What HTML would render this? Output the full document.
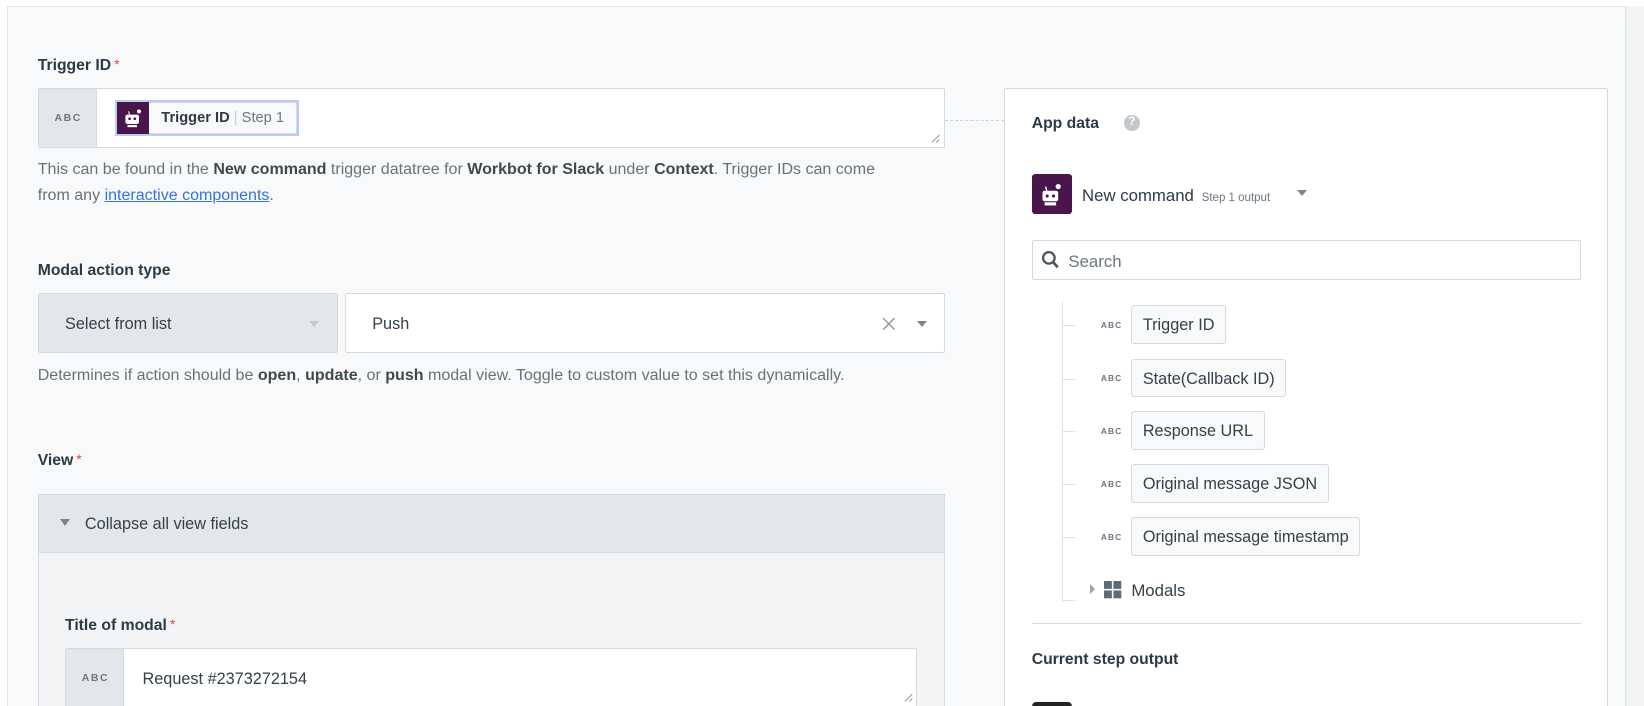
<!DOCTYPE html>
<html><head><meta charset="utf-8"><style>
*{box-sizing:border-box;margin:0;padding:0}
html,body{width:1644px;height:706px;overflow:hidden;background:#f3f4f6}
body{font-family:"Liberation Sans",sans-serif;color:#2d3a45}
#w{zoom:1.0485;width:1568px;height:673px;position:relative;background:#fff}
.a{position:absolute}
.page{left:7px;top:6px;width:1543px;height:700px;background:#f8f9fa;border-left:1px solid #e3e6e9;border-top:1px solid #e3e6e9}
.lbl{font-size:15px;font-weight:bold;color:#2d3a45}
.lbl i{color:#e0473c;font-style:normal;font-weight:normal;font-size:13px;vertical-align:top;margin-left:3px}
.help{font-size:15.3px;color:#67737c;line-height:25px}
.help b{color:#3d4a54}
.box{background:#fff;border:1px solid #d6dadf;border-radius:2px}
.abc{font-size:10px;font-weight:bold;letter-spacing:1.5px;color:#6b7680}
.side{background:#e4e7ea;border-right:1px solid #d6dadf}
.pill{border:1px solid #d6dadf;border-radius:3px;background:#f8f9fa;font-size:15.5px;color:#34414b;height:37px;line-height:37px;padding:0 10px}
.bot{background:#4a154b;border-radius:3px}
</style></head><body><div id="w">
<div class="a page"></div>
<div class="a" style="left:1550px;top:6px;width:18px;height:667px;background:#f3f4f6;border-left:1px solid #e3e6e9"></div>

<div class="a lbl" style="left:36px;top:54px">Trigger ID<i>*</i></div>
<div class="a box" style="left:36px;top:84px;width:865px;height:57px;overflow:hidden">
 <div class="a side" style="left:0;top:0;width:56px;height:57px"></div>
 <div class="a abc" style="left:15px;top:23px">ABC</div>
 <div class="a" style="left:73px;top:10px;width:175px;height:35px;border:2px solid #b7cdf2;background:#fff">
  <div class="a" style="left:0;top:0;width:171px;height:31px;border:1px solid #d6dadf;background:#f8f9fa"></div>
  <div class="a bot" style="left:0;top:0;width:30px;height:31px;border-radius:0">
   <svg width="30" height="31" viewBox="0 0 30 31"><rect x="8" y="12" width="13" height="9" rx="2" fill="#fff"/><circle cx="12" cy="16" r="1.3" fill="#4a154b"/><circle cx="17" cy="16" r="1.3" fill="#4a154b"/><rect x="10" y="22" width="9" height="2" fill="#fff"/><line x1="12" y1="12" x2="11" y2="9" stroke="#fff"/><circle cx="21" cy="9" r="2" fill="#fff"/></svg>
  </div>
  <div class="a" style="left:42px;top:8px;font-size:14px;font-weight:bold;color:#2d3a45;white-space:nowrap">Trigger ID <span style="color:#ccc;font-weight:normal">|</span> <span style="font-weight:normal;color:#6b7680">Step 1</span></div>
 </div>
 <svg class="a" style="right:3px;bottom:3px" width="9" height="9"><path d="M1 8L8 1M5 8L8 5" stroke="#999"/></svg>
</div>
<div class="a" style="left:901px;top:114px;width:57px;border-top:1px dashed #cfd4d9"></div>
<div class="a help" style="left:36px;top:149px;width:825px">This can be found in the <b>New command</b> trigger datatree for <b>Workbot for Slack</b> under <b>Context</b>. Trigger IDs can come from any <span style="color:#3a73d8;text-decoration:underline">interactive components</span>.</div>

<div class="a lbl" style="left:36px;top:250px">Modal action type</div>
<div class="a" style="left:36px;top:279px;width:286px;height:58px;background:#e4e7ea;border:1px solid #d6dadf;border-radius:2px"></div>
<div class="a" style="left:62px;top:300px;font-size:15.5px;color:#34414b">Select from list</div>
<div class="a" style="left:295px;top:306px;border:5px solid transparent;border-top:6px solid #c3c8cd"></div>
<div class="a box" style="left:329px;top:279px;width:572px;height:58px"></div>
<div class="a" style="left:355px;top:300px;font-size:15.5px;color:#34414b">Push</div>
<svg class="a" style="left:841px;top:302px" width="13" height="13"><path d="M1 1L12 12M12 1L1 12" stroke="#8a949c" stroke-width="1.3"/></svg>
<div class="a" style="left:875px;top:306px;border:5px solid transparent;border-top:6px solid #7b858e"></div>
<div class="a help" style="left:36px;top:345px;white-space:nowrap">Determines if action should be <b>open</b>, <b>update</b>, or <b>push</b> modal view. Toggle to custom value to set this dynamically.</div>

<div class="a lbl" style="left:36px;top:431px">View<i>*</i></div>
<div class="a" style="left:36px;top:471px;width:865px;height:210px;background:#f3f4f6;border:1px solid #d6dadf"></div>
<div class="a" style="left:37px;top:472px;width:863px;height:55px;background:#e4e7ea;border-bottom:1px solid #d6dadf"></div>
<div class="a" style="left:57px;top:495px;border:5px solid transparent;border-top:7px solid #7b858e"></div>
<div class="a" style="left:81px;top:491px;font-size:15.5px;color:#34414b">Collapse all view fields</div>
<div class="a lbl" style="left:62px;top:588px">Title of modal<i>*</i></div>
<div class="a box" style="left:62px;top:618px;width:813px;height:60px;overflow:hidden">
 <div class="a side" style="left:0;top:0;width:55px;height:60px"></div>
 <div class="a abc" style="left:15px;top:23px">ABC</div>
 <div class="a" style="left:73px;top:20px;font-size:15.5px;color:#34414b">Request #2373272154</div>
 <svg class="a" style="right:3px;top:42px" width="9" height="9"><path d="M1 8L8 1M5 8L8 5" stroke="#999"/></svg>
</div>

<div class="a" style="left:958px;top:84px;width:576px;height:600px;background:#fff;border:1px solid #d6dadf;border-radius:2px"></div>
<div class="a lbl" style="left:984px;top:110px">App data</div>
<div class="a" style="left:1072px;top:110px;width:15px;height:15px;border-radius:50%;background:#c3c8cd;color:#fff;font-size:11px;font-weight:bold;text-align:center;line-height:15px">?</div>
<div class="a bot" style="left:984px;top:166px;width:38px;height:38px">
 <svg width="38" height="38" viewBox="0 0 38 38"><rect x="10" y="16" width="15" height="10" rx="2" fill="#fff"/><circle cx="14.5" cy="21" r="1.5" fill="#4a154b"/><circle cx="20.5" cy="21" r="1.5" fill="#4a154b"/><rect x="12" y="27" width="11" height="3" fill="#fff"/><line x1="14" y1="16" x2="13" y2="12" stroke="#fff" stroke-width="1.3"/><circle cx="25" cy="12" r="2.5" fill="#fff"/></svg>
</div>
<div class="a" style="left:1032px;top:177px;font-size:16px;color:#2d3a45;white-space:nowrap">New command <span style="font-size:11px;color:#6b7680;margin-left:3px">Step 1 output</span></div>
<div class="a" style="left:1237px;top:181px;border:5px solid transparent;border-top:6px solid #7b858e"></div>
<div class="a box" style="left:984px;top:229px;width:524px;height:38px"></div>
<svg class="a" style="left:993px;top:238px" width="18" height="19"><circle cx="7.5" cy="7.5" r="5.5" stroke="#4b5760" stroke-width="2.2" fill="none"/><path d="M11.5 11.5L16 16.5" stroke="#4b5760" stroke-width="2.6"/></svg>
<div class="a" style="left:1019px;top:240px;font-size:16px;color:#6b7680">Search</div>
<div class="a" style="left:1013px;top:287px;width:1px;height:286px;background:#dfe2e5"></div>
<div class="a" style="left:1013px;top:572px;width:12px;height:1px;background:#dfe2e5"></div>

<div class="a" style="left:1013px;top:310px;width:12px;height:1px;background:#dfe2e5"></div>
<div class="a abc" style="left:1050px;top:305px;font-size:8px;letter-spacing:1px">ABC</div>
<div class="a pill" style="left:1079px;top:291px">Trigger ID</div>
<div class="a" style="left:1013px;top:361px;width:12px;height:1px;background:#dfe2e5"></div>
<div class="a abc" style="left:1050px;top:356px;font-size:8px;letter-spacing:1px">ABC</div>
<div class="a pill" style="left:1079px;top:342px">State(Callback ID)</div>
<div class="a" style="left:1013px;top:411px;width:12px;height:1px;background:#dfe2e5"></div>
<div class="a abc" style="left:1050px;top:406px;font-size:8px;letter-spacing:1px">ABC</div>
<div class="a pill" style="left:1079px;top:392px">Response URL</div>
<div class="a" style="left:1013px;top:462px;width:12px;height:1px;background:#dfe2e5"></div>
<div class="a abc" style="left:1050px;top:457px;font-size:8px;letter-spacing:1px">ABC</div>
<div class="a pill" style="left:1079px;top:443px">Original message JSON</div>
<div class="a" style="left:1013px;top:512px;width:12px;height:1px;background:#dfe2e5"></div>
<div class="a abc" style="left:1050px;top:507px;font-size:8px;letter-spacing:1px">ABC</div>
<div class="a pill" style="left:1079px;top:493px">Original message timestamp</div>

<div class="a" style="left:1040px;top:557px;border:5px solid transparent;border-left:5px solid #9aa3aa;border-right:0"></div>
<svg class="a" style="left:1053px;top:554px" width="17" height="17"><rect x="0" y="0" width="7.5" height="7.5" fill="#5f6b74"/><rect x="9" y="0" width="7.5" height="7.5" fill="#5f6b74"/><rect x="0" y="9" width="7.5" height="7.5" fill="#5f6b74"/><rect x="9" y="9" width="7.5" height="7.5" fill="#5f6b74"/></svg>
<div class="a" style="left:1079px;top:554px;font-size:16px;color:#34414b">Modals</div>
<div class="a" style="left:984px;top:594px;width:524px;height:1px;background:#d6dadf"></div>
<div class="a lbl" style="left:984px;top:621px">Current step output</div>
<div class="a" style="left:984px;top:670px;width:38px;height:10px;background:#222;border-radius:4px 4px 0 0"></div>
</div></body></html>
